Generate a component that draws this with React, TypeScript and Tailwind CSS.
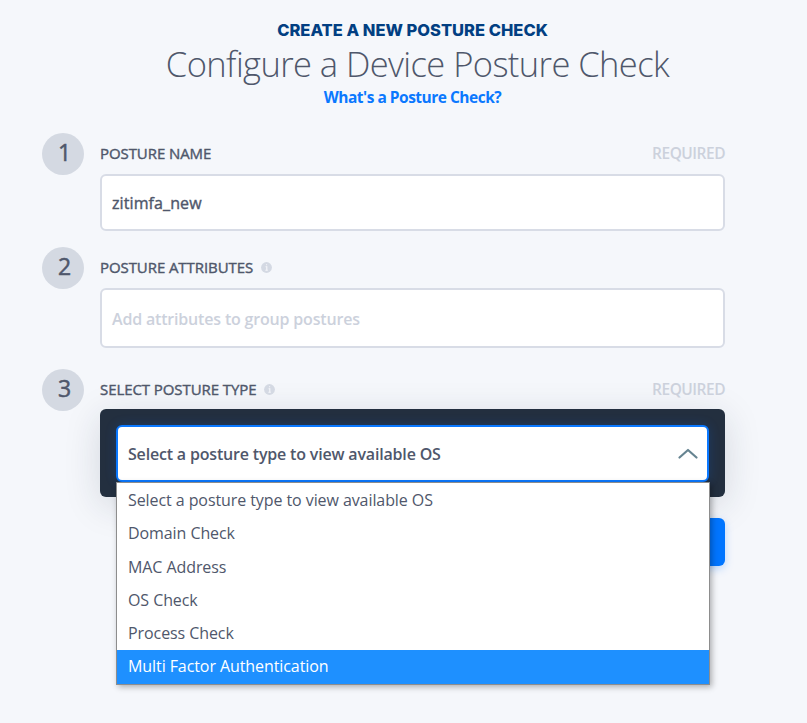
import type { ReactNode } from "react";

const OPTIONS = [
  "Select a posture type to view available OS",
  "Domain Check",
  "MAC Address",
  "OS Check",
  "Process Check",
  "Multi Factor Authentication",
];

const InfoIcon = () => (
  <svg className="ml-2 size-[11px]" viewBox="0 0 11 11">
    <circle cx="5.5" cy="5.5" r="5.4" fill="#d4d9e3" />
    <path d="M4.6 4.7h1.2v3.6M4.4 8.3h2.4M5.1 2.7h1" stroke="#f6f7fb" strokeWidth="1.1" fill="none" />
  </svg>
);

interface StepProps {
  num: number;
  label: string;
  info?: boolean;
  required?: boolean;
  className: string;
  children: ReactNode;
}

const Step = ({ num, label, info, required, className, children }: StepProps) => (
  <section className={`flex gap-4 ${className}`}>
    <div className="flex size-[42px] shrink-0 justify-center rounded-full bg-[#d4d9e2] pl-[3px] text-[23px] leading-[39px] [-webkit-text-stroke:0.5px]">
      {num}
    </div>
    <div className="w-[625px]">
      <div className="flex h-[41px] items-center">
        <span className="text-[15px] tracking-[-0.08px] [-webkit-text-stroke:0.4px]">{label}</span>
        {info && <InfoIcon />}
        {required && (
          <span className="ml-auto pt-px text-[15.5px] font-semibold tracking-[-0.5px] text-[#ccd1dc]">REQUIRED</span>
        )}
      </div>
      {children}
    </div>
  </section>
);

const App = () => {
  return (
    <main className="h-[723px] w-[807px] overflow-hidden bg-[#f5f7fb] pl-[42px] font-['Open_Sans',sans-serif] text-[#4f576b]">
      <header className="flex h-[133px] w-[741px] flex-col items-center pt-5 whitespace-nowrap">
        <h2 className="h-5 text-[16.5px] leading-5 font-extrabold text-[#023f82] [font-family:Inter,sans-serif]">
          CREATE A NEW POSTURE CHECK
        </h2>
        <h1 className="ml-[10px] h-[47px] text-[34.5px] leading-[47px] font-light tracking-[-0.58px]">
          Configure a Device Posture Check
        </h1>
        <a className="h-5 text-[15.5px] leading-5 font-bold tracking-[-0.5px] text-[#0a78ff]">
          What's a Posture Check?
        </a>
      </header>

      <Step num={1} label="POSTURE NAME" required className="h-[114px]">
        <div className="flex h-[57px] items-center rounded-md border-2 border-[#d8dce6] bg-white px-2.5 text-base tracking-[0.1px] [-webkit-text-stroke:0.4px]">
          zitimfa_new
        </div>
      </Step>

      <Step num={2} label="POSTURE ATTRIBUTES" info className="h-[122px]">
        <div className="flex h-[60px] items-center rounded-md border-2 border-[#d8dce6] bg-white px-2.5 pt-0.5 text-base font-semibold tracking-[-0.18px] text-[#ccd1dc]">
          Add attributes to group postures
        </div>
      </Step>

      <Step num={3} label="SELECT POSTURE TYPE" info required className="">
        <div className="-mt-px h-[88px] rounded-md bg-[#232f3f] px-4 pt-4 shadow-[0_8px_36px_rgba(30,40,60,0.15)]">
          <div className="relative">
            <div className="flex h-[57px] items-center justify-between rounded-md border-2 border-[#0a78ff] bg-white pr-[9px] pl-2.5 text-base font-semibold tracking-[-0.18px] shadow-[0_0_12px_rgba(0,110,255,0.2)]">
              Select a posture type to view available OS
              <svg className="h-[11px] w-5" viewBox="0 0 20 11" fill="none" stroke="#668491" strokeWidth="2.2">
                <path d="M1.5 9.5 10 2l8.5 7.5" strokeLinecap="round" strokeLinejoin="round" />
              </svg>
            </div>
            {/* open option list, hangs over the footer */}
            <ul className="absolute top-[57px] left-0 z-10 w-[594px] border border-[#8d8d8d] bg-white pt-px shadow-[2px_2px_6px_rgba(0,0,0,0.3)]">
              {OPTIONS.map((option, i) => (
                <li
                  key={option}
                  className={`h-[33.3px] pl-[11px] text-base leading-[33.3px] tracking-[-0.08px] ${
                    i === OPTIONS.length - 1 ? "bg-[#1e90ff] text-white" : ""
                  }`}
                >
                  {option}
                </li>
              ))}
            </ul>
          </div>
        </div>
        <div className="mt-[21px] ml-auto h-12 w-40 rounded-md bg-[#0075ff] shadow-[0_3px_8px_rgba(0,117,255,0.25)]" />
      </Step>
    </main>
  );
};

export default App;
